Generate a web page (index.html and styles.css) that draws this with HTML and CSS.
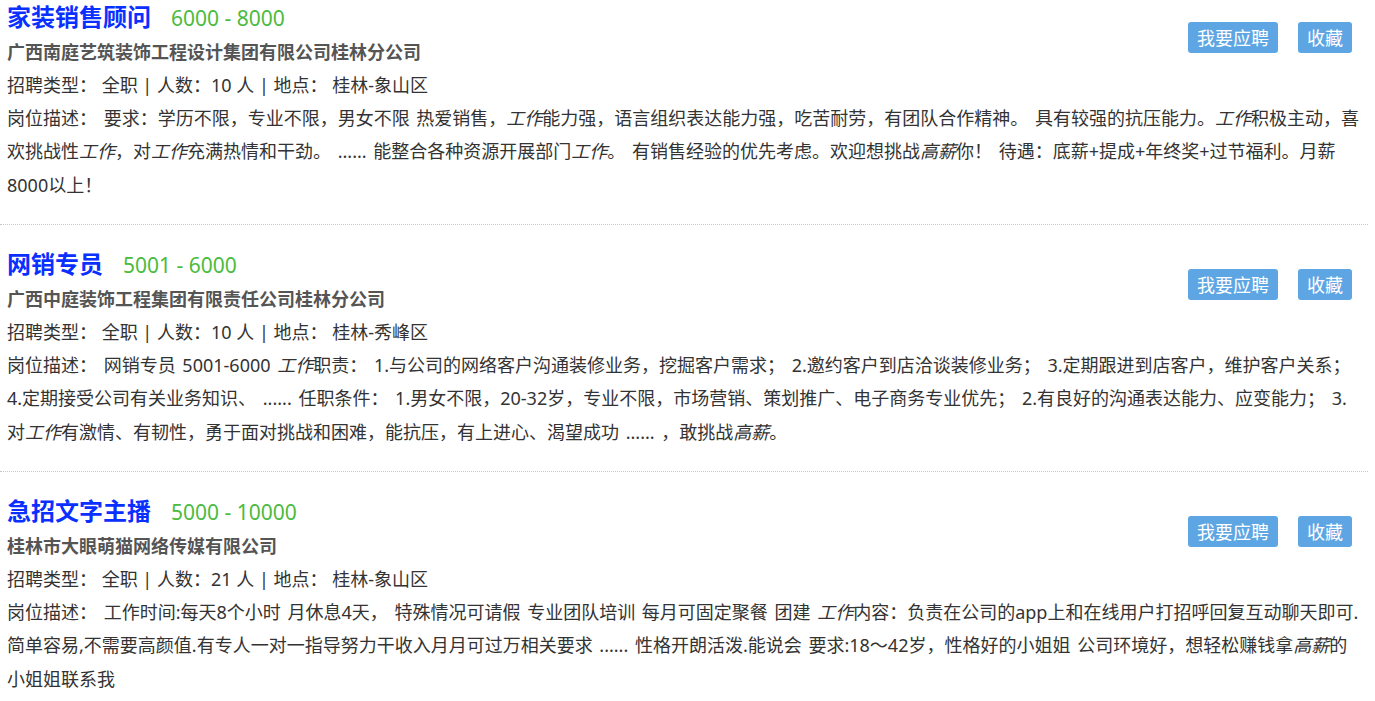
FILE: index.html
```html
<!DOCTYPE html>
<html lang="zh-CN">
<head>
<meta charset="utf-8">
<title>职位列表</title>
<link rel="stylesheet" href="styles.css">
</head>
<body>
<ul class="job-list">
  <li class="job">
    <div class="job-head">
      <div class="job-main">
        <div class="job-title"><a class="job-name" href="#">家装销售顾问</a><span class="salary">6000 - 8000</span></div>
        <div class="company">广西南庭艺筑装饰工程设计集团有限公司桂林分公司</div>
        <div class="info">招聘类型： 全职 | 人数：10 人 | 地点： 桂林-象山区</div>
      </div>
      <div class="actions">
        <a class="btn btn-apply" href="#">我要应聘</a>
        <a class="btn btn-fav" href="#">收藏</a>
      </div>
    </div>
    <p class="desc">岗位描述： 要求：学历不限，专业不限，男女不限 热爱销售，<em>工作</em>能力强，语言组织表达能力强，吃苦耐劳，有团队合作精神。 具有较强的抗压能力。<em>工作</em>积极主动，喜欢挑战性<em>工作</em>，对<em>工作</em>充满热情和干劲。 ...... 能整合各种资源开展部门<em>工作</em>。 有销售经验的优先考虑。欢迎想挑战<em>高薪</em>你！ 待遇：底薪+提成+年终奖+过节福利。月薪8000以上！</p>
  </li>
  <li class="job">
    <div class="job-head">
      <div class="job-main">
        <div class="job-title"><a class="job-name" href="#">网销专员</a><span class="salary">5001 - 6000</span></div>
        <div class="company">广西中庭装饰工程集团有限责任公司桂林分公司</div>
        <div class="info">招聘类型： 全职 | 人数：10 人 | 地点： 桂林-秀峰区</div>
      </div>
      <div class="actions">
        <a class="btn btn-apply" href="#">我要应聘</a>
        <a class="btn btn-fav" href="#">收藏</a>
      </div>
    </div>
    <p class="desc">岗位描述： 网销专员 5001-6000 <em>工作</em>职责： 1.与公司的网络客户沟通装修业务，挖掘客户需求； 2.邀约客户到店洽谈装修业务； 3.定期跟进到店客户，维护客户关系； 4.定期接受公司有关业务知识、 ...... 任职条件： 1.男女不限，20-32岁，专业不限，市场营销、策划推广、电子商务专业优先； 2.有良好的沟通表达能力、应变能力； 3.对<em>工作</em>有激情、有韧性，勇于面对挑战和困难，能抗压，有上进心、渴望成功 ...... ，敢挑战<em>高薪</em>。</p>
  </li>
  <li class="job">
    <div class="job-head">
      <div class="job-main">
        <div class="job-title"><a class="job-name" href="#">急招文字主播</a><span class="salary">5000 - 10000</span></div>
        <div class="company">桂林市大眼萌猫网络传媒有限公司</div>
        <div class="info">招聘类型： 全职 | 人数：21 人 | 地点： 桂林-象山区</div>
      </div>
      <div class="actions">
        <a class="btn btn-apply" href="#">我要应聘</a>
        <a class="btn btn-fav" href="#">收藏</a>
      </div>
    </div>
    <p class="desc">岗位描述： 工作时间:每天8个小时 月休息4天， 特殊情况可请假 专业团队培训 每月可固定聚餐 团建 <em>工作</em>内容：负责在公司的app上和在线用户打招呼回复互动聊天即可.简单容易,不需要高颜值.有专人一对一指导努力干收入月月可过万相关要求 ...... 性格开朗活泼.能说会 要求:18～42岁，性格好的小姐姐 公司环境好，想轻松赚钱拿<em>高薪</em>的小姐姐联系我</p>
  </li>
</ul>
</body>
</html>
```

FILE: styles.css
```css
html, body {
  margin: 0;
  padding: 0;
  background: #fff;
}

body {
  font-family: "Noto Sans", "Noto Sans CJK SC", sans-serif;
  color: #333;
}

.job-list {
  list-style: none;
  margin: 0;
  padding: 0;
  width: 1368px;
}

.job {
  padding: 22px 7px 22px 7px;
  border-bottom: 1px dotted #c8c8c8;
}

.job:first-child {
  padding-top: 0;
}

.job:last-child {
  border-bottom: none;
}

.job-head {
  display: flex;
  justify-content: space-between;
  align-items: flex-start;
}

.job-title {
  display: flex;
  align-items: baseline;
  height: 32px;
  line-height: 32px;
  margin-bottom: 4px;
}

.job-name {
  font-family: "Noto Sans CJK SC", sans-serif;
  font-size: 24px;
  font-weight: bold;
  color: #0a30ff;
  text-decoration: none;
}

.salary {
  margin-left: 20px;
  font-size: 21px;
  color: #4cbb3c;
}

.company {
  font-family: "Noto Sans CJK SC", sans-serif;
  font-size: 18px;
  font-weight: bold;
  color: #555;
  line-height: 31px;
  margin-bottom: 1px;
}

.info {
  font-size: 18px;
  line-height: 34px;
  color: #333;
}

.actions {
  display: flex;
  gap: 20px;
  margin-top: 22px;
  margin-right: 9px;
}

.btn {
  display: block;
  height: 31px;
  line-height: 31px;
  padding: 0 9px;
  font-family: "Noto Sans CJK SC", sans-serif;
  font-size: 18px;
  color: #fff;
  background: #5ea6e3;
  border-radius: 3px;
  text-decoration: none;
}

.desc {
  margin: 0;
  font-size: 18px;
  line-height: 33.33px;
  word-spacing: 2px;
  color: #333;
}

.desc em {
  font-style: italic;
}
```
